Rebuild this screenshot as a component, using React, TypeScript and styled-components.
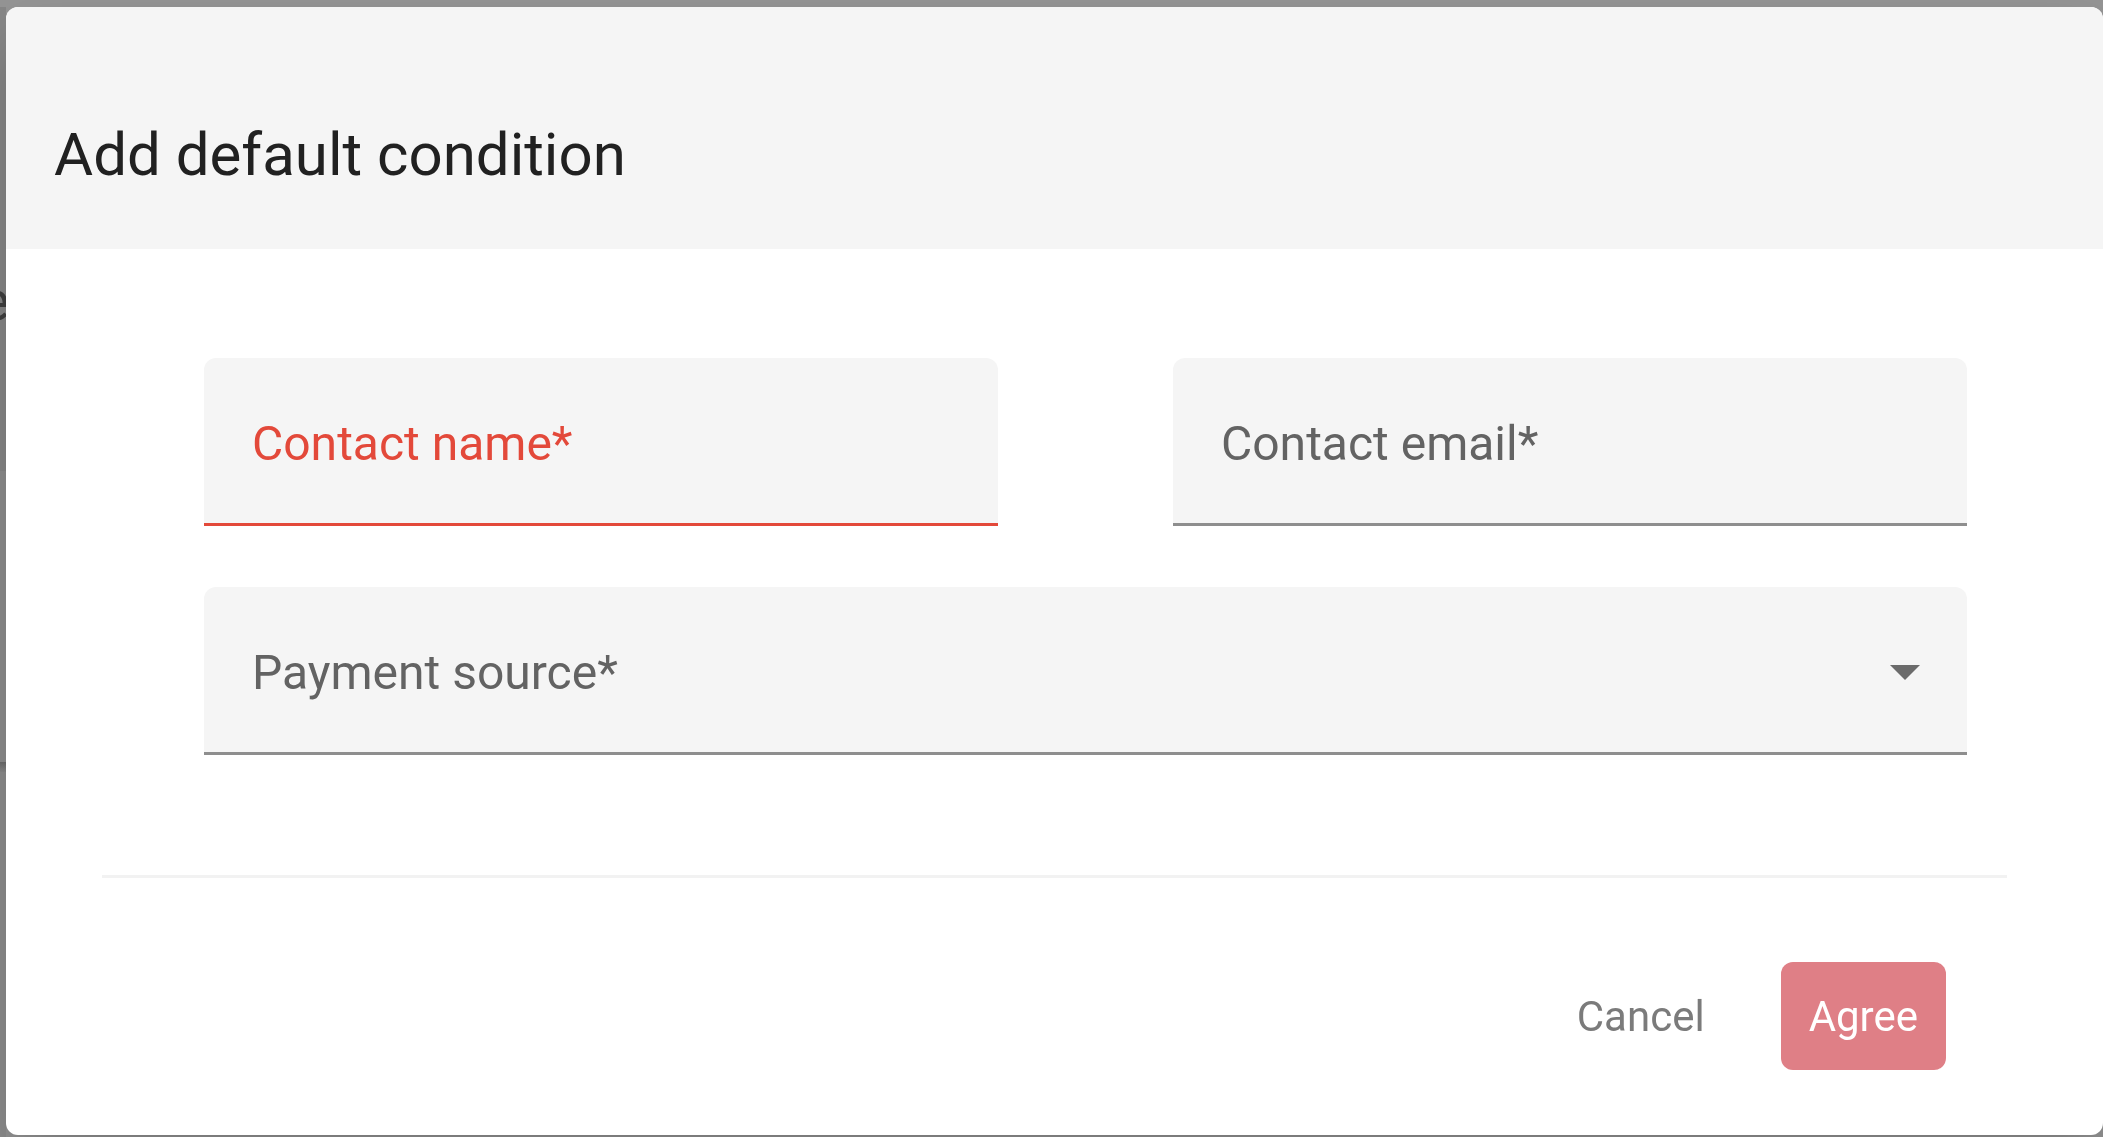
import React, { FC } from "react";
import styled, { createGlobalStyle } from "styled-components";

const GlobalStyle = createGlobalStyle`
  html, body {
    margin: 0;
    padding: 0;
  }
  body {
    background: #959595;
    font-family: Roboto, "Noto Sans", "Liberation Sans", sans-serif;
    overflow: hidden;
  }
`;

// the page that sits behind the modal, only a sliver of it shows
const BehindPage = styled.div`
  height: 100vh;
  display: flex;
`;

const SideStrip = styled.div`
  width: 6px;
  margin-top: 7px;
  display: flex;
  flex-direction: column;
  overflow: hidden;
`;

const StripBlock = styled.div<{ $h: string; $bg: string }>`
  flex: ${(p) => (p.$h === "auto" ? "1" : `0 0 ${p.$h}`)};
  background: ${(p) => p.$bg};
  overflow: hidden;
`;

const PeekText = styled.span`
  display: block;
  margin: 266px 0 0 -20px;
  font-size: 56px;
  line-height: 56px;
  color: #3f3f3f;
`;

const Dialog = styled.div`
  position: fixed;
  top: 7px;
  left: 6px;
  width: 2097px;
  height: 1128px;
  background: #ffffff;
  border-radius: 12px;
  overflow: hidden;
  display: flex;
  flex-direction: column;
  box-shadow: 0 33px 66px rgba(0, 0, 0, 0.2);
`;

const Header = styled.div`
  height: 242px;
  box-sizing: border-box;
  padding: 112px 48px 0;
  background: #f5f5f5;

  h2 {
    margin: 0;
    font-size: 60px;
    line-height: 72px;
    font-weight: 400;
    color: #212121;
  }
`;

const Content = styled.div`
  display: grid;
  grid-template-columns: 1fr 1fr;
  column-gap: 175px;
  row-gap: 61px;
  padding: 109px 136px 0 198px;
`;

const Field = styled.div<{ $error?: boolean; $wide?: boolean }>`
  grid-column: ${(p) => (p.$wide ? "span 2" : "auto")};
  height: 168px;
  box-sizing: border-box;
  display: flex;
  align-items: center;
  padding: 6px 47px 0 48px;
  background: #f5f5f5;
  border-radius: 12px 12px 0 0;
  border-bottom: 3px solid ${(p) => (p.$error ? "#e3493a" : "#8e8e8e")};
`;

const Label = styled.span<{ $error?: boolean }>`
  font-size: 48px;
  line-height: 48px;
  color: ${(p) => (p.$error ? "#e3493a" : "#636363")};
`;

const Caret = styled.svg`
  margin-left: auto;
  width: 30px;
  height: 15px;
  fill: #6b6b6b;
`;

const Divider = styled.div`
  height: 3px;
  margin: 120px 96px 0;
  background: #f2f2f2;
`;

const Footer = styled.div`
  display: flex;
  justify-content: flex-end;
  gap: 50px;
  padding: 84px 157px 0 0;
`;

const Button = styled.button<{ $primary?: boolean }>`
  height: 108px;
  padding: 0 ${(p) => (p.$primary ? "28px" : "26px")};
  border: none;
  outline: none;
  border-radius: 12px;
  font-family: inherit;
  font-size: 42px;
  font-weight: 400;
  color: ${(p) => (p.$primary ? "#ffffff" : "#7b7b7b")};
  background: ${(p) => (p.$primary ? "#df7f86" : "transparent")};
  cursor: pointer;
`;

const App: FC = () => (
  <>
    <GlobalStyle />
    <BehindPage>
      <SideStrip>
        <StripBlock $h="464px" $bg="#878787">
          <PeekText>e</PeekText>
        </StripBlock>
        <StripBlock $h="291px" $bg="#8e8e8e" />
        <StripBlock $h="10px" $bg="linear-gradient(#6c6c6c, #8a8a8a)" />
        <StripBlock $h="auto" $bg="#8e8e8e" />
      </SideStrip>
    </BehindPage>

    <Dialog role="dialog">
      <Header>
        <h2>Add default condition</h2>
      </Header>
      <Content>
        <Field $error>
          <Label $error>Contact name*</Label>
        </Field>
        <Field>
          <Label>Contact email*</Label>
        </Field>
        <Field $wide>
          <Label>Payment source*</Label>
          <Caret viewBox="7 10 10 5">
            <path d="M7 10l5 5 5-5z" />
          </Caret>
        </Field>
      </Content>
      <Divider />
      <Footer>
        <Button type="button">Cancel</Button>
        <Button type="button" $primary>
          Agree
        </Button>
      </Footer>
    </Dialog>
  </>
);

export default App;
